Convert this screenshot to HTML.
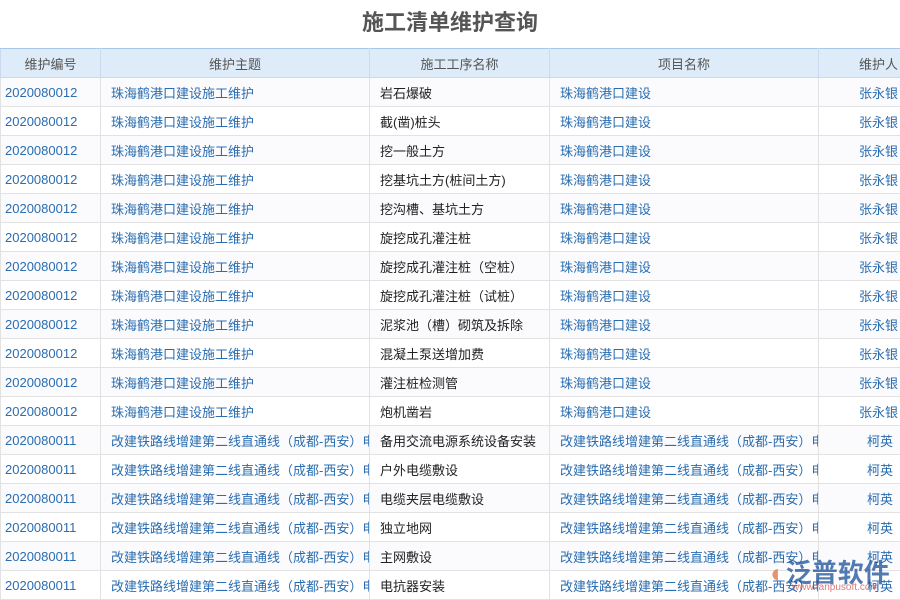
<!DOCTYPE html>
<html><head><meta charset="utf-8"><style>
body{margin:0;width:900px;height:600px;overflow:hidden;background:#fff;font-family:"Liberation Sans","Noto Sans CJK SC",sans-serif;position:relative}
h1{margin:0;height:48px;line-height:46px;text-align:center;font-size:22px;color:#555;font-weight:bold}
table{border-collapse:collapse;table-layout:fixed;width:930px;font-size:13px}
td,th{height:28px;border:1px solid #e2e2e2;white-space:nowrap;overflow:hidden;padding:0}
th{background:#deebf8;color:#555;font-weight:normal;border-color:#c9dcef;border-top:1px solid #a9c7e6}
td{color:#2a6db0}
td.a{padding-left:4px}
td.b,td.d{padding-left:10px}
td.c{padding-left:10px;color:#222}
td.e{padding-left:40px}
td.k{padding-left:48px}
tr:nth-child(even) td{background:#fbfbfd}
.logo{position:absolute;left:770px;top:553px;font-size:26px;color:#1a4f9a;font-weight:bold;opacity:.75}
.url{position:absolute;left:792px;top:582px;font-size:10px;color:#c44;opacity:.7}
</style></head><body>
<h1>施工清单维护查询</h1>
<table>
<colgroup><col style="width:100px"><col style="width:269px"><col style="width:180px"><col style="width:269px"><col style="width:112px"></colgroup>
<tr><th>维护编号</th><th>维护主题</th><th>施工工序名称</th><th>项目名称</th><th style="text-align:left;padding-left:40px">维护人</th></tr>
<tr><td class="a">2020080012</td><td class="b">珠海鹤港口建设施工维护</td><td class="c">岩石爆破</td><td class="d">珠海鹤港口建设</td><td class="e">张永银</td></tr>
<tr><td class="a">2020080012</td><td class="b">珠海鹤港口建设施工维护</td><td class="c">截(凿)桩头</td><td class="d">珠海鹤港口建设</td><td class="e">张永银</td></tr>
<tr><td class="a">2020080012</td><td class="b">珠海鹤港口建设施工维护</td><td class="c">挖一般土方</td><td class="d">珠海鹤港口建设</td><td class="e">张永银</td></tr>
<tr><td class="a">2020080012</td><td class="b">珠海鹤港口建设施工维护</td><td class="c">挖基坑土方(桩间土方)</td><td class="d">珠海鹤港口建设</td><td class="e">张永银</td></tr>
<tr><td class="a">2020080012</td><td class="b">珠海鹤港口建设施工维护</td><td class="c">挖沟槽、基坑土方</td><td class="d">珠海鹤港口建设</td><td class="e">张永银</td></tr>
<tr><td class="a">2020080012</td><td class="b">珠海鹤港口建设施工维护</td><td class="c">旋挖成孔灌注桩</td><td class="d">珠海鹤港口建设</td><td class="e">张永银</td></tr>
<tr><td class="a">2020080012</td><td class="b">珠海鹤港口建设施工维护</td><td class="c">旋挖成孔灌注桩（空桩）</td><td class="d">珠海鹤港口建设</td><td class="e">张永银</td></tr>
<tr><td class="a">2020080012</td><td class="b">珠海鹤港口建设施工维护</td><td class="c">旋挖成孔灌注桩（试桩）</td><td class="d">珠海鹤港口建设</td><td class="e">张永银</td></tr>
<tr><td class="a">2020080012</td><td class="b">珠海鹤港口建设施工维护</td><td class="c">泥浆池（槽）砌筑及拆除</td><td class="d">珠海鹤港口建设</td><td class="e">张永银</td></tr>
<tr><td class="a">2020080012</td><td class="b">珠海鹤港口建设施工维护</td><td class="c">混凝土泵送增加费</td><td class="d">珠海鹤港口建设</td><td class="e">张永银</td></tr>
<tr><td class="a">2020080012</td><td class="b">珠海鹤港口建设施工维护</td><td class="c">灌注桩检测管</td><td class="d">珠海鹤港口建设</td><td class="e">张永银</td></tr>
<tr><td class="a">2020080012</td><td class="b">珠海鹤港口建设施工维护</td><td class="c">炮机凿岩</td><td class="d">珠海鹤港口建设</td><td class="e">张永银</td></tr>
<tr><td class="a">2020080011</td><td class="b">改建铁路线增建第二线直通线（成都-西安）电</td><td class="c">备用交流电源系统设备安装</td><td class="d">改建铁路线增建第二线直通线（成都-西安）电</td><td class="k">柯英</td></tr>
<tr><td class="a">2020080011</td><td class="b">改建铁路线增建第二线直通线（成都-西安）电</td><td class="c">户外电缆敷设</td><td class="d">改建铁路线增建第二线直通线（成都-西安）电</td><td class="k">柯英</td></tr>
<tr><td class="a">2020080011</td><td class="b">改建铁路线增建第二线直通线（成都-西安）电</td><td class="c">电缆夹层电缆敷设</td><td class="d">改建铁路线增建第二线直通线（成都-西安）电</td><td class="k">柯英</td></tr>
<tr><td class="a">2020080011</td><td class="b">改建铁路线增建第二线直通线（成都-西安）电</td><td class="c">独立地网</td><td class="d">改建铁路线增建第二线直通线（成都-西安）电</td><td class="k">柯英</td></tr>
<tr><td class="a">2020080011</td><td class="b">改建铁路线增建第二线直通线（成都-西安）电</td><td class="c">主网敷设</td><td class="d">改建铁路线增建第二线直通线（成都-西安）电</td><td class="k">柯英</td></tr>
<tr><td class="a">2020080011</td><td class="b">改建铁路线增建第二线直通线（成都-西安）电</td><td class="c">电抗器安装</td><td class="d">改建铁路线增建第二线直通线（成都-西安）电</td><td class="k">柯英</td></tr>
</table>
<div class="logo"><span style="color:#e07040">◐</span>泛普软件</div>
<div class="url">www.fanpusoft.com</div>
</body></html>
